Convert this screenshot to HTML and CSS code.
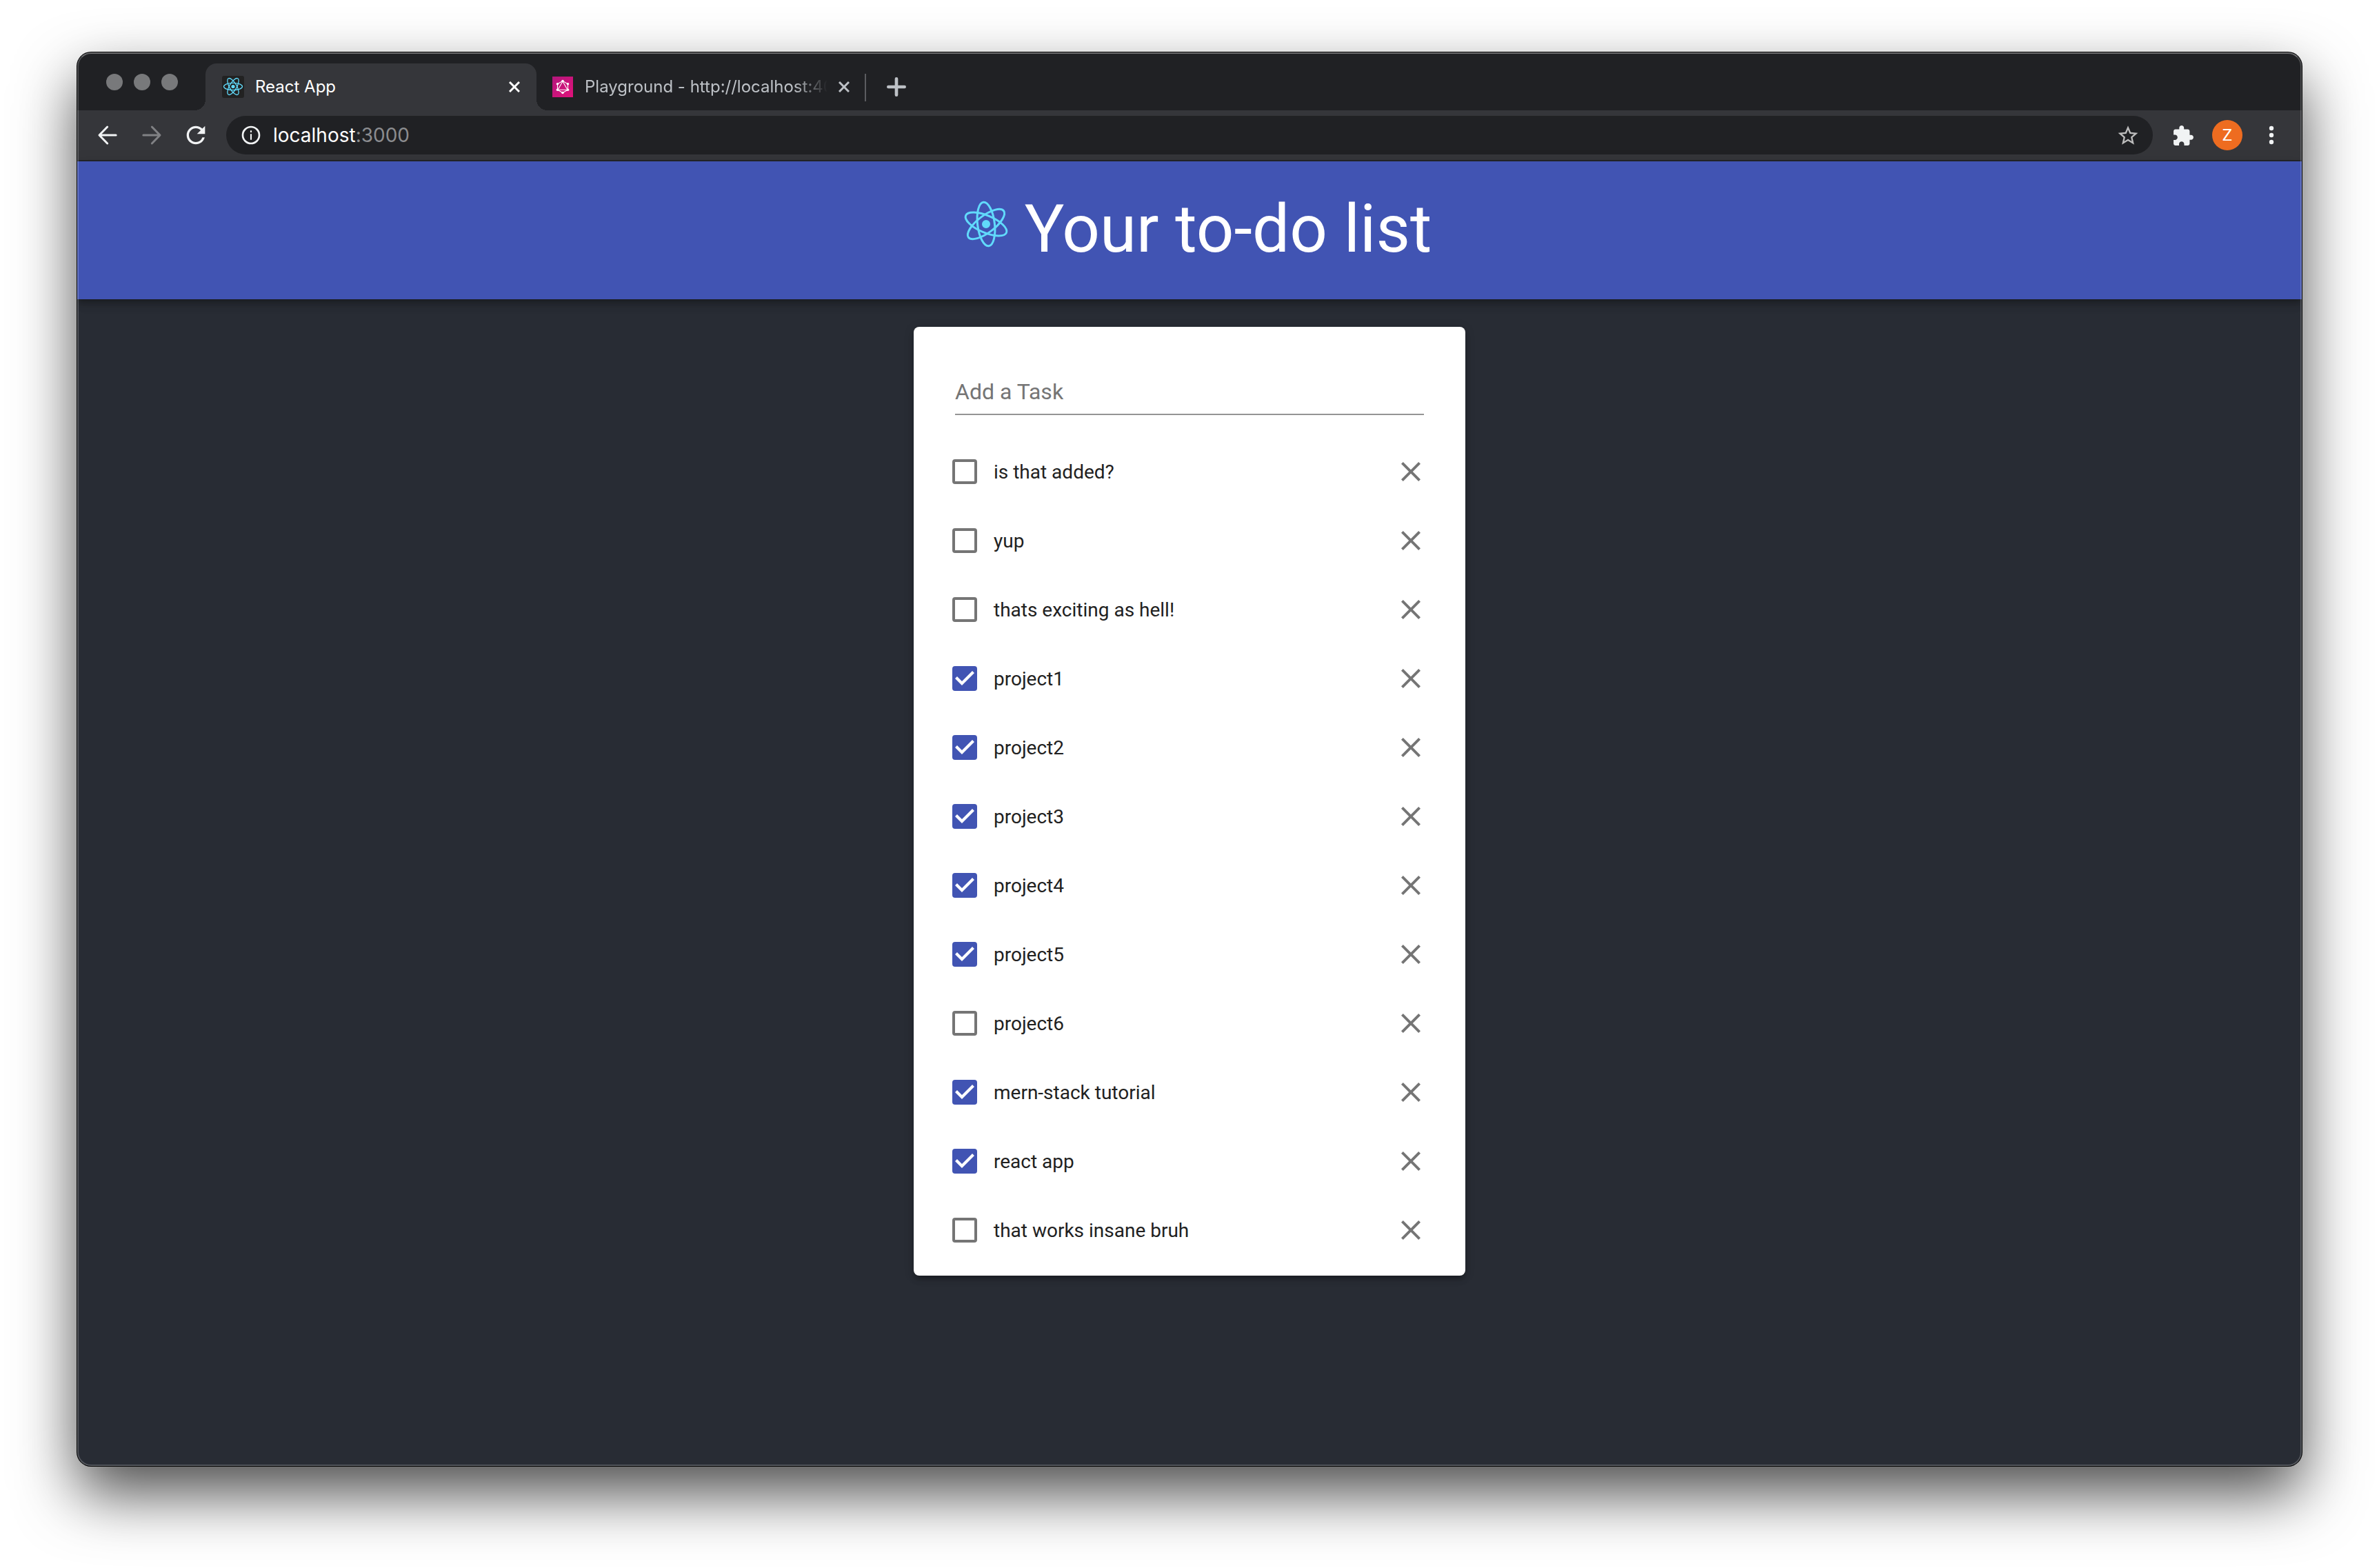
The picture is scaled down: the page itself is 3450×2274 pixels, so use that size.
FILE: index.html
```html
<!DOCTYPE html>
<html lang="en">
<head>
<meta charset="utf-8">
<title>React App</title>
<link rel="stylesheet" href="styles.css">
</head>
<body>
<svg class="sprite" aria-hidden="true">
  <symbol id="atom" viewBox="-36 -36 72 72">
    <g fill="none" stroke="currentColor" stroke-width="3">
      <ellipse rx="32" ry="12.4"/>
      <ellipse rx="32" ry="12.4" transform="rotate(60)"/>
      <ellipse rx="32" ry="12.4" transform="rotate(120)"/>
    </g>
    <circle r="6" fill="currentColor"/>
  </symbol>
  <symbol id="tab-close" viewBox="0 0 16 16"><path d="M1 1l14 14M15 1L1 15" fill="none" stroke="currentColor" stroke-width="3"/></symbol>
  <symbol id="close" viewBox="5 5 14 14"><path d="M19 6.41L17.59 5 12 10.59 6.41 5 5 6.41 10.59 12 5 17.59 6.41 19 12 13.41 17.59 19 19 17.59 13.41 12z" fill="currentColor"/></symbol>
</svg>
<div class="window">
  <div class="tab-strip">
    <div class="lights"><span class="light"></span><span class="light"></span><span class="light"></span></div>
    <div class="tab tab-active">
      <svg class="favicon" viewBox="0 0 32 32">
        <rect width="32" height="32" rx="3" fill="#222"/>
        <g transform="translate(16 15.5)" fill="none" stroke="#61dafb" stroke-width="1.3">
          <ellipse rx="13.5" ry="5.2"/><ellipse rx="13.5" ry="5.2" transform="rotate(60)"/><ellipse rx="13.5" ry="5.2" transform="rotate(120)"/>
          <circle r="2.6" fill="#61dafb" stroke="none"/>
        </g>
      </svg>
      <span class="tab-title">React App</span>
      <button class="tab-close" aria-label="Close tab"><svg><use href="#tab-close"/></svg></button>
    </div>
    <div class="tab tab-second">
      <svg class="favicon" viewBox="0 0 32 32">
        <defs><linearGradient id="pink" x1="0" y1="0" x2="1" y2="1"><stop offset="0" stop-color="#b3177c"/><stop offset="1" stop-color="#e0127a"/></linearGradient></defs>
        <rect x="1" y="1" width="30" height="30" fill="url(#pink)"/>
        <g fill="none" stroke="#fff" stroke-width="1.1"><path d="M16 7.500l7.500 4.300v8.400L16 24.500l-7.500-4.300v-8.400z"/><path d="M16 8l7 12.200H9z"/></g>
        <g fill="#fff"><circle cx="16" cy="7.500" r="1.800"/><circle cx="23.500" cy="11.800" r="1.800"/><circle cx="23.500" cy="20.200" r="1.800"/><circle cx="16" cy="24.500" r="1.800"/><circle cx="8.500" cy="20.200" r="1.800"/><circle cx="8.500" cy="11.800" r="1.800"/></g>
      </svg>
      <span class="tab-title tab-title-faded">Playground - http://localhost:4000</span>
      <button class="tab-close" aria-label="Close tab"><svg><use href="#tab-close"/></svg></button>
    </div>
    <button class="new-tab" aria-label="New tab"><svg viewBox="0 0 24 24"><path d="M12 2v20M2 12h20" stroke="currentColor" stroke-width="4" stroke-linecap="round"/></svg></button>
  </div>
  <div class="toolbar">
    <button class="tool" aria-label="Back"><svg viewBox="0 0 24 24"><path d="M19.300 12H5.200M11.800 4.800L4.800 12l7 7.200" fill="none" stroke="currentColor" stroke-width="1.800" stroke-linecap="round" stroke-linejoin="round"/></svg></button>
    <button class="tool tool-off" aria-label="Forward"><svg viewBox="0 0 24 24"><path d="M4.700 12h14.100M12.200 4.800l7 7.200-7 7.200" fill="none" stroke="currentColor" stroke-width="1.800" stroke-linecap="round" stroke-linejoin="round"/></svg></button>
    <button class="tool" aria-label="Reload"><svg viewBox="0 0 24 24"><path d="M17.650 6.350A7.958 7.958 0 0 0 12 4c-4.420 0-7.990 3.580-7.990 8s3.570 8 7.990 8c3.730 0 6.840-2.550 7.730-6h-2.080A5.990 5.990 0 0 1 12 18c-3.310 0-6-2.690-6-6s2.690-6 6-6c1.660 0 3.140.69 4.220 1.780L13 11h7V4l-2.350 2.350z" fill="currentColor"/></svg></button>
    <div class="omnibox">
      <svg class="info" viewBox="0 0 24 24"><circle cx="12" cy="12" r="9" fill="none" stroke="currentColor" stroke-width="2"/><path d="M11.200 10.700h1.600V17h-1.600zM11.200 7h1.600v2h-1.600z" fill="currentColor"/></svg>
      <div class="url">localhost<span class="port">:3000</span></div>
      <button class="star" aria-label="Bookmark this tab"><svg viewBox="-0.5 -1 25 25"><path d="M22 9.240l-7.190-.62L12 2 9.190 8.630 2 9.240l5.460 4.730L5.820 21 12 17.270 18.180 21l-1.630-7.030L22 9.240zM12 15.400l-3.760 2.270 1-4.280-3.320-2.880 4.380-.38L12 6.100l1.710 4.040 4.380.38-3.320 2.880 1 4.280L12 15.400z" fill="currentColor"/></svg></button>
    </div>
    <div class="tools-right">
      <button class="tool" aria-label="Extensions"><svg class="puzzle" viewBox="0.5 -0.5 24 24"><path d="M20.500 11H19V7c0-1.100-.9-2-2-2h-4V3.500C13 2.120 11.880 1 10.500 1S8 2.120 8 3.500V5H4c-1.100 0-1.990.9-1.990 2v3.800H3.500c1.490 0 2.700 1.210 2.700 2.700s-1.210 2.700-2.700 2.700H2V20c0 1.100.9 2 2 2h3.800v-1.500c0-1.490 1.210-2.700 2.700-2.700 1.490 0 2.700 1.210 2.700 2.700V22H17c1.100 0 2-.9 2-2v-4h1.500c1.380 0 2.500-1.120 2.500-2.500S21.880 11 20.500 11z" fill="currentColor"/></svg></button>
      <button class="avatar" aria-label="Profile">Z</button>
      <button class="tool" aria-label="Menu"><svg viewBox="0 0 40 40"><g fill="currentColor"><circle cx="20" cy="10" r="3.200"/><circle cx="20" cy="20" r="3.200"/><circle cx="20" cy="30" r="3.200"/></g></svg></button>
    </div>
  </div>
  <main class="page">
    <header class="app-bar">
      <h1 class="app-title"><svg class="logo" viewBox="-56 -40 112 80"><use href="#atom" x="-36" y="-36" width="72" height="72" transform="rotate(23)"/></svg>Your to-do list</h1>
    </header>
    <section class="card">
      <form class="add-form"><input class="add-input" type="text" placeholder="Add a Task" aria-label="Add a Task"></form>
      <ul class="tasks">
        <li class="task"><input class="check" type="checkbox" id="t1"><label class="task-label" for="t1">is that added?</label><button class="remove" aria-label="Remove"><svg><use href="#close"/></svg></button></li>
        <li class="task"><input class="check" type="checkbox" id="t2"><label class="task-label" for="t2">yup</label><button class="remove" aria-label="Remove"><svg><use href="#close"/></svg></button></li>
        <li class="task"><input class="check" type="checkbox" id="t3"><label class="task-label" for="t3">thats exciting as hell!</label><button class="remove" aria-label="Remove"><svg><use href="#close"/></svg></button></li>
        <li class="task"><input class="check" type="checkbox" id="t4" checked><label class="task-label" for="t4">project1</label><button class="remove" aria-label="Remove"><svg><use href="#close"/></svg></button></li>
        <li class="task"><input class="check" type="checkbox" id="t5" checked><label class="task-label" for="t5">project2</label><button class="remove" aria-label="Remove"><svg><use href="#close"/></svg></button></li>
        <li class="task"><input class="check" type="checkbox" id="t6" checked><label class="task-label" for="t6">project3</label><button class="remove" aria-label="Remove"><svg><use href="#close"/></svg></button></li>
        <li class="task"><input class="check" type="checkbox" id="t7" checked><label class="task-label" for="t7">project4</label><button class="remove" aria-label="Remove"><svg><use href="#close"/></svg></button></li>
        <li class="task"><input class="check" type="checkbox" id="t8" checked><label class="task-label" for="t8">project5</label><button class="remove" aria-label="Remove"><svg><use href="#close"/></svg></button></li>
        <li class="task"><input class="check" type="checkbox" id="t9"><label class="task-label" for="t9">project6</label><button class="remove" aria-label="Remove"><svg><use href="#close"/></svg></button></li>
        <li class="task"><input class="check" type="checkbox" id="t10" checked><label class="task-label" for="t10">mern-stack tutorial</label><button class="remove" aria-label="Remove"><svg><use href="#close"/></svg></button></li>
        <li class="task"><input class="check" type="checkbox" id="t11" checked><label class="task-label" for="t11">react app</label><button class="remove" aria-label="Remove"><svg><use href="#close"/></svg></button></li>
        <li class="task"><input class="check" type="checkbox" id="t12"><label class="task-label" for="t12">that works insane bruh</label><button class="remove" aria-label="Remove"><svg><use href="#close"/></svg></button></li>
      </ul>
    </section>
  </main>
</div>
</body>
</html>
```
FILE: styles.css
```css
* { box-sizing: border-box; }

body {
  margin: 0;
  min-height: 100vh;
  padding: 76px 112px 148px;
  display: flex;
  background: #fff;
  font-family: Roboto, sans-serif;
}

button {
  padding: 0;
  border: 0;
  background: none;
  color: inherit;
  font: inherit;
  display: flex;
  align-items: center;
  justify-content: center;
  flex: none;
}

svg { display: block; flex: none; }

.sprite { position: absolute; width: 0; height: 0; }

/* Window frame */
.window {
  position: relative;
  flex: 1;
  min-width: 0;
  display: flex;
  flex-direction: column;
  border-radius: 20px;
  overflow: hidden;
  background: #282c34;
  box-shadow: 0 0 0 1px #000, 0 40px 88px rgba(0, 0, 0, 0.7);
}

.window::after {
  content: "";
  position: absolute;
  inset: 0;
  border-radius: 20px;
  border: 2px solid rgba(255, 255, 255, 0.2);
  border-top-color: rgba(255, 255, 255, 0.34);
  pointer-events: none;
}

/* Tabs */
.tab-strip {
  height: 84px;
  flex: none;
  display: flex;
  align-items: flex-end;
  background: #202124;
  color: #bdc1c6;
  font: 400 24px/32px Inter, sans-serif;
}

.lights {
  align-self: center;
  display: flex;
  gap: 16px;
  margin: 2px 40px 0 42px;
}

.light {
  width: 24px;
  height: 24px;
  border-radius: 50%;
  background: #78797b;
}

.tab {
  position: relative;
  height: 68px;
  display: flex;
  align-items: center;
  gap: 16px;
}

.tab-active {
  width: 480px;
  padding: 0 24px;
  border-radius: 16px 16px 0 0;
  background: #35363a;
  color: #fff;
}

.tab-active::before,
.tab-active::after {
  content: "";
  position: absolute;
  bottom: 0;
  width: 16px;
  height: 16px;
}

.tab-active::before {
  right: 100%;
  background: radial-gradient(circle at 0 0, transparent 16px, #35363a 16px);
}

.tab-active::after {
  left: 100%;
  background: radial-gradient(circle at 100% 0, transparent 16px, #35363a 16px);
}

.tab-second {
  width: 478px;
  padding: 0 24px 0 22px;
}

.tab-second::after {
  content: "";
  position: absolute;
  right: 0;
  top: 15px;
  width: 2px;
  height: 40px;
  background: #5b5c60;
}

.favicon { width: 32px; height: 32px; }

.tab-title {
  flex: 1;
  min-width: 0;
  overflow: hidden;
  white-space: nowrap;
}

.tab-title-faded {
  -webkit-mask-image: linear-gradient(to left, transparent, #000 48px);
  mask-image: linear-gradient(to left, transparent, #000 48px);
}

.tab-close,
.tab-close svg { width: 16px; height: 16px; }

.new-tab {
  height: 68px;
  margin-left: 30px;
}

.new-tab svg { width: 28px; height: 28px; }

/* Toolbar */
.toolbar {
  height: 74px;
  flex: none;
  display: flex;
  align-items: center;
  gap: 24px;
  padding: 0 24px;
  background: #35363a;
  border-bottom: 2px solid #252629;
  color: #f1f3f4;
}

.tool,
.tool svg { width: 40px; height: 40px; }

.tool .puzzle { width: 33px; height: 33px; }

.tool-off { color: #808184; }

.omnibox {
  flex: 1;
  min-width: 0;
  height: 56px;
  display: flex;
  align-items: center;
  gap: 16px;
  padding: 0 18px 0 20px;
  border-radius: 28px;
  background: #202124;
  font: 400 28px/36px Inter, sans-serif;
}

.info { width: 32px; height: 32px; }

.url { flex: 1; color: #fff; }

.port { color: #8b8c8f; }

.star { color: #bdbdbd; }

.star svg { width: 36px; height: 36px; }

.tools-right {
  display: flex;
  align-items: center;
  gap: 22px;
}

.avatar {
  width: 44px;
  height: 44px;
  border-radius: 50%;
  background: #ee6c20;
  color: #fff;
  font-size: 24px;
}

/* App */
.page {
  flex: 1;
  display: flex;
  flex-direction: column;
  align-items: center;
  gap: 40px;
  padding-bottom: 40px;
}

.app-bar {
  align-self: stretch;
  padding: 42px 0 46px;
  background: #4154b3;
  color: #fff;
  text-align: center;
  box-shadow: 0 4px 8px -2px rgba(0, 0, 0, 0.2), 0 8px 10px rgba(0, 0, 0, 0.14), 0 2px 20px rgba(0, 0, 0, 0.12);
}

.app-title {
  margin: 0;
  font-weight: 400;
  font-size: 96px;
  line-height: 112px;
}

.logo {
  display: inline-block;
  width: 112px;
  height: 80px;
  color: #61dafb;
}

.card {
  width: 800px;
  max-width: 100%;
  padding: 56px 0 16px;
  border-radius: 8px;
  background: #fff;
  box-shadow: 0 6px 6px -4px rgba(0, 0, 0, 0.2), 0 6px 8px rgba(0, 0, 0, 0.14), 0 2px 16px rgba(0, 0, 0, 0.12);
}

.add-form { padding: 0 60px 32px; }

.add-input {
  display: block;
  width: 100%;
  height: 72px;
  padding: 6px 0 0;
  border: 0;
  border-bottom: 2px solid #949494;
  border-radius: 0;
  outline: 0;
  background: none;
  color: #212121;
  font: 400 32px/40px Roboto, sans-serif;
}

.add-input::placeholder { color: #757575; opacity: 1; }

.tasks {
  margin: 0;
  padding: 0;
  list-style: none;
}

.task {
  height: 100px;
  display: flex;
  align-items: center;
  gap: 24px;
  padding: 0 65px 0 56px;
}

.check {
  appearance: none;
  width: 36px;
  height: 36px;
  flex: none;
  margin: 0;
  border: 4px solid #757575;
  border-radius: 4px;
}

.check:checked {
  border: 0;
  background: #4154b3;
}

.check:checked::before {
  content: "";
  display: block;
  width: 36px;
  height: 36px;
  background: #fff;
  clip-path: polygon(14px 28px, 4px 18px, 7px 15px, 14px 22px, 29px 7px, 32px 10px);
}

.task-label {
  flex: 1;
  padding-top: 2px;
  color: #212121;
  font-size: 28px;
  line-height: 40px;
}

.remove { color: #757575; }

.remove,
.remove svg { width: 28px; height: 28px; }
```
